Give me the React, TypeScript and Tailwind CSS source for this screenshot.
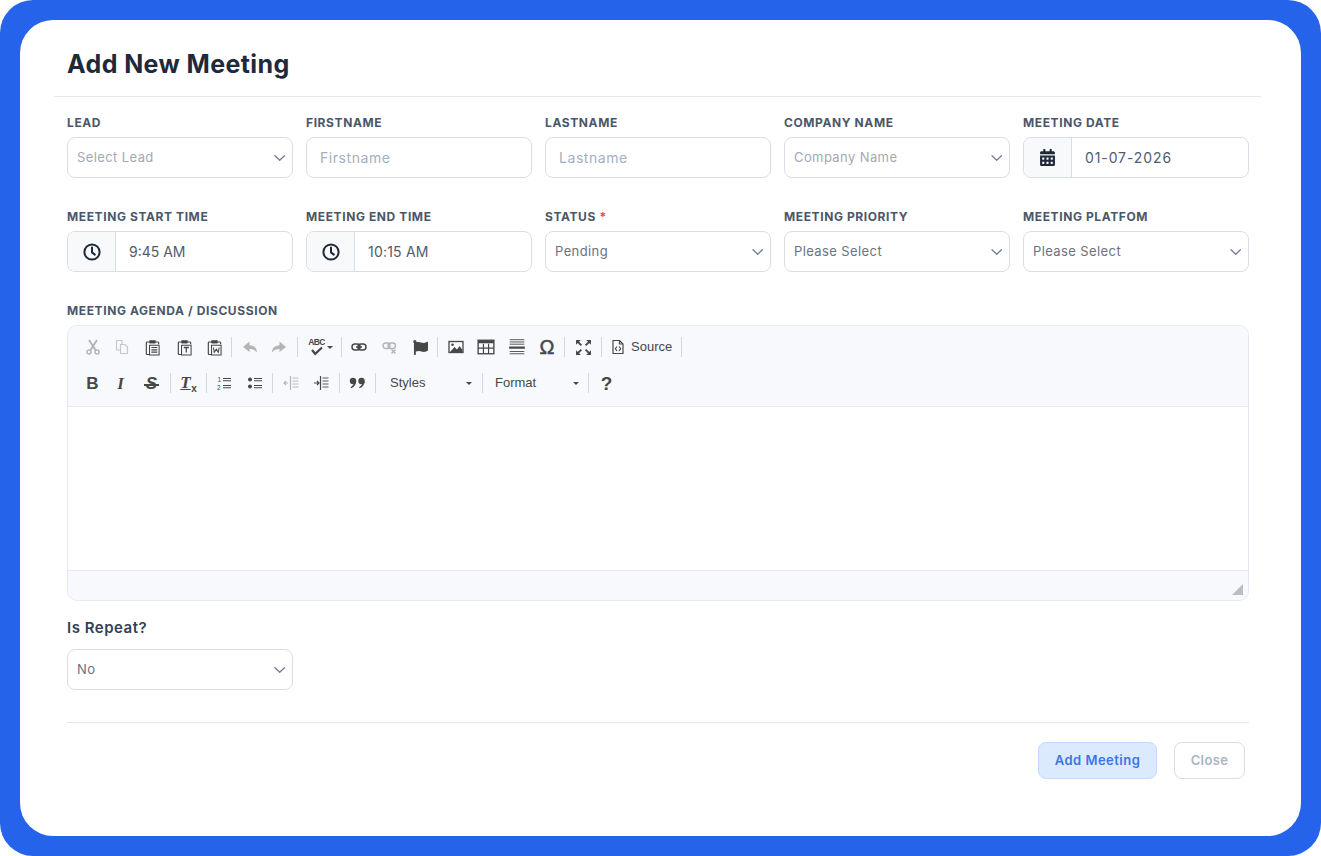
import React from "react";
import { FaCalendarAlt, FaFlag } from "react-icons/fa";

const Chevron = () => (
  <svg width="12" height="8" viewBox="0 0 12 8" fill="none" stroke="#737f90" strokeWidth="1.3" strokeLinecap="round" strokeLinejoin="round">
    <path d="M1 1.7 5.7 6.2l4.7-4.5" />
  </svg>
);
const Clock = () => (
  <svg width="18" height="18" viewBox="0 0 18 18" fill="none" stroke="#1f2937" strokeWidth="2" strokeLinecap="round" strokeLinejoin="round">
    <circle cx="9" cy="9" r="7.6" />
    <path d="M9 4.6V9.4l2.8 2.2" />
  </svg>
);
const Label = ({ children }: { children: React.ReactNode }) => (
  <div className="mb-[6px] h-[17px] text-[12px] font-bold uppercase leading-[17px] tracking-[0.6px] text-[#4b5768]">{children}</div>
);
const Sel = ({ text, muted }: { text: string; muted?: boolean }) => (
  <div className="flex h-[41px] items-center justify-between rounded-lg border border-[#d9dde6] bg-white pl-[9px] pr-[6px]">
    <span className={`text-[13px] tracking-[0.4px] ${muted ? "text-[#a3a9b4]" : "text-[#6b7280]"}`}>{text}</span>
    <Chevron />
  </div>
);
const Addon = ({ icon, value, track }: { icon: React.ReactNode; value: string; track: string }) => (
  <div className="flex h-[41px] overflow-hidden rounded-lg border border-[#d9dde6] bg-white">
    <div className="flex w-[48px] items-center justify-center border-r border-[#d9dde6] bg-[#f8f9fb]">{icon}</div>
    <div className={`flex items-center pl-[13px] text-[14px] text-[#515c6c] ${track}`}>{value}</div>
  </div>
);
const Txt = ({ placeholder }: { placeholder: string }) => (
  <div className="flex h-[41px] items-center rounded-lg border border-[#d9dde6] bg-white pl-[13px] text-[14px] tracking-[0.55px] text-[#a3afc2]">{placeholder}</div>
);

const Sep = ({ w }: { w: string }) => (
  <div className={`flex h-5 shrink-0 justify-center ${w}`}>
    <div className="h-5 w-px bg-[#d3d7de]" />
  </div>
);
const B = ({ w, children }: { w: string; children: React.ReactNode }) => (
  <div className={`flex h-5 shrink-0 items-center justify-center ${w}`}>{children}</div>
);
const Ic = ({ children, c = "#474747", s = 16 }: { children: React.ReactNode; c?: string; s?: number }) => (
  <svg width={s} height={s} viewBox="0 0 16 16" fill="none" stroke={c} strokeWidth="1.2" color={c}>{children}</svg>
);
const Clip = ({ children }: { children?: React.ReactNode }) => (
  <Ic s={17}>
    <path d="M5 2.8H3a.8.8 0 0 0-.8.8v10.2a.8.8 0 0 0 .8.8h2" strokeWidth="1.1" />
    <path d="M11 2.8h2a.8.8 0 0 1 .8.8V5" strokeWidth="1.1" />
    <path d="M5.3 1.6h5.4v2.2H5.3z" fill="#474747" strokeWidth=".8" />
    <path d="M5.2 5.8h9v9.2h-9z" strokeWidth="1" />
    {children}
  </Ic>
);
const Caret = () => <span className="ml-[1px] h-0 w-0 border-x-[3px] border-t-[3px] border-x-transparent border-t-[#474747]" />;

const Toolbar = () => (
  <div className="flex h-[81px] flex-col border-b border-[#e4e8f0] bg-[#f7f9fd] pl-[11px] font-['Liberation_Sans',sans-serif]">
    <div className="mt-[11px] flex h-5 items-center">
      <B w="w-[28px]"><Ic c="#b4b4b4"><path d="M4 1l6.5 10M12 1 5.5 11" strokeWidth="2" /><circle cx="4" cy="13" r="2" strokeWidth="1.5" /><circle cx="12" cy="13" r="2" strokeWidth="1.5" /></Ic></B>
      <B w="w-[29px]"><Ic c="#c8c8c8"><path d="M2.5 1.5h5.5l0 3.5M2.5 1.5v9.5h4" /><path d="M6.5 5.5h4.5l2.5 2.5v6.5h-7z" /></Ic></B>
      <B w="w-[33px]"><Clip><path d="M7 8h5.5M7 10.2h5.5M7 12.4h5.5" strokeWidth="1.1" /></Clip></B>
      <B w="w-[30px]"><Clip><path d="M7.3 8h4.8M9.7 8v4.8" strokeWidth="1.2" /></Clip></B>
      <B w="w-[30px]"><Clip><path d="M7 8l.8 4.6 1.9-3 1.9 3 .8-4.6" strokeWidth="1" /></Clip></B>
      <Sep w="w-[4px]" />
      <B w="w-[34px]"><Ic c="#b4b4b4"><path d="M7.5 2.5 1 8l6.5 5V10c3 0 5.2.8 7.5 3.5 0-4.5-3-7-7.5-7.3z" fill="#b4b4b4" stroke="none" /></Ic></B>
      <B w="w-[24px]"><Ic c="#b4b4b4"><path d="M8.5 2.5 15 8l-6.5 5V10c-3 0-5.2.8-7.5 3.5 0-4.5 3-7 7.5-7.3z" fill="#b4b4b4" stroke="none" /></Ic></B>
      <Sep w="w-[12px]" />
      <B w="w-[34px]">
        <span className="flex items-center">
          <span className="flex h-[18px] w-[18px] flex-col items-center">
            <span className="h-[8px] text-[8.5px] font-bold leading-[8px] tracking-[-0.6px] text-[#474747]">ABC</span>
            <svg width="14" height="10" viewBox="0 0 14 10" fill="none">
              <path d="M2 4l3.2 3.8L12 1.5" stroke="#474747" strokeWidth="2.2" />
            </svg>
          </span>
          <Caret />
        </span>
      </B>
      <Sep w="w-[8px]" />
      <B w="w-[28px]"><Ic><rect x="1" y="5" width="8" height="6" rx="3" strokeWidth="1.5" /><rect x="7" y="5" width="8" height="6" rx="3" strokeWidth="1.5" /><path d="M5 8h6" strokeWidth="1.5" /></Ic></B>
      <B w="w-[34px]"><Ic c="#b4b4b4"><rect x="1" y="4" width="7" height="5.5" rx="2.7" strokeWidth="1.4" /><rect x="6" y="4" width="7.5" height="5.5" rx="2.7" strokeWidth="1.4" /><path d="M9.5 10.5l4 4M13.5 10.5l-4 4" strokeWidth="1.4" /></Ic></B>
      <B w="w-[26px]"><FaFlag className="text-[15px] text-[#474747]" /></B>
      <Sep w="w-[8px]" />
      <B w="w-[30px]"><Ic><rect x="1" y="2.5" width="14" height="11" strokeWidth="1.3" /><circle cx="4.5" cy="5.7" r="1.3" fill="#474747" stroke="none" /><path d="M2 13l4.5-5 2.5 2.5 2.5-3.5L14.5 11v2.5z" fill="#474747" stroke="none" /></Ic></B>
      <B w="w-[30px]"><Ic s={18}><rect x="1" y="2" width="14" height="12" strokeWidth="1.2" /><path d="M1 3.5h14" strokeWidth="2.4" /><path d="M1 9h14M5.7 5v9M10.3 5v9" strokeWidth="1" /></Ic></B>
      <B w="w-[32px]"><Ic s={18}><path d="M1.5 1.5h13M1.5 3.5h13M1.5 5.5h13M1.5 12h13M1.5 14h13" strokeWidth=".8" /><path d="M1 8.5h14" strokeWidth="2" /></Ic></B>
      <B w="w-[28px]"><span className="text-[20px] leading-none text-[#474747] [-webkit-text-stroke:0.5px_#474747]">Ω</span></B>
      <Sep w="w-[6px]" />
      <B w="w-[32px]"><Ic s={17}><path d="M1.5 1.5 6 6M14.5 1.5 10 6M1.5 14.5 6 10M14.5 14.5 10 10" strokeWidth="1.8" /><path d="M1 1h4.5L1 5.5zM15 1h-4.5L15 5.5zM1 15h4.5L1 10.5zM15 15h-4.5L15 10.5z" fill="#474747" stroke="none" /></Ic></B>
      <Sep w="w-[4px]" />
      <div className="ml-[7px] flex h-5 w-4 items-center justify-center"><Ic><path d="M3 1.5h6.5l3.5 3.5v9.5H3z" /><path d="M9.5 1.5V5H13" /><path d="M7 7.5 5.3 9.7 7 12M9 7.5l1.7 2.2L9 12" strokeWidth="1.1" /></Ic></div>
      <span className="ml-[5px] w-[41px] text-[13px] leading-5 text-[#474747]">Source</span>
      <Sep w="w-[19px]" />
    </div>
    <div className="mt-[16px] flex h-5 items-center">
      <B w="w-[27px]"><span className="text-[17px] font-bold leading-none text-[#474747]">B</span></B>
      <B w="w-[29px]"><span className="font-['Liberation_Serif',serif] text-[17px] font-bold italic leading-none text-[#474747]">I</span></B>
      <B w="w-[33px]">
        <span className="relative text-[17px] font-bold italic leading-none text-[#474747]">S
          <span className="absolute left-[-2px] right-[-2px] top-[9px] h-[2px] bg-[#474747]" />
        </span>
      </B>
      <Sep w="w-[4px]" />
      <B w="w-[32px]"><span className="pr-[5px]"><span className="relative font-['Liberation_Serif',serif] text-[17px] font-bold italic leading-none text-[#474747] underline">T<span className="absolute -right-[6px] bottom-[-2px] font-['Liberation_Sans',sans-serif] text-[10px] not-italic no-underline">x</span></span></span></B>
      <Sep w="w-[4px]" />
      <B w="w-[32px]"><Ic><path d="M7 3.5h8M7 5.7h8M7 10.5h8M7 12.7h8" strokeWidth="1.1" /><text x="1.5" y="7" fontSize="6.5" fontFamily="Liberation Sans" fill="#474747" stroke="none">1</text><text x="1" y="14.5" fontSize="6.5" fontFamily="Liberation Sans" fill="#474747" stroke="none">2</text></Ic></B>
      <B w="w-[30px]"><Ic><circle cx="3" cy="4.5" r="2" fill="#474747" stroke="none" /><circle cx="3" cy="11.5" r="2" fill="#474747" stroke="none" /><path d="M7 3.5h8M7 5.7h8M7 10.5h8M7 12.7h8" strokeWidth="1.1" /></Ic></B>
      <Sep w="w-[4px]" />
      <B w="w-[34px]"><Ic c="#b4b4b4"><path d="M7.5 1v14" /><path d="M9.5 3h6M9.5 6h6M9.5 9h6M9.5 12h6" strokeWidth=".9" /><path d="M1 8h4M3 6 1 8l2 2" /></Ic></B>
      <B w="w-[26px]"><Ic><path d="M7.5 1v14" /><path d="M9.5 3h6M9.5 6h6M9.5 9h6M9.5 12h6" strokeWidth=".9" /><path d="M1 8h5M4 6l2 2-2 2" /></Ic></B>
      <Sep w="w-[10px]" />
      <B w="w-[26px]">
        <svg width="17" height="12" viewBox="0 0 17 12" fill="#474747">
          <circle cx="4" cy="4" r="3.2" /><path d="M7.2 4c0 3.5-2.3 6.3-5 7.2l-.6-1C3.4 9 4.6 7.6 4.8 6z" />
          <circle cx="12.5" cy="4" r="3.2" /><path d="M15.7 4c0 3.5-2.3 6.3-5 7.2l-.6-1c1.8-1.2 3-2.6 3.2-4.2z" />
        </svg>
      </B>
      <Sep w="w-[10px]" />
      <div className="flex w-[100px] shrink-0 items-center pl-[10px] pr-[8px]"><span className="flex-1 text-[13px] text-[#474747]">Styles</span><Caret /></div>
      <Sep w="w-[5px]" />
      <div className="flex w-[100px] shrink-0 items-center pl-[10px] pr-[6px]"><span className="flex-1 text-[13px] text-[#474747]">Format</span><Caret /></div>
      <Sep w="w-[7px]" />
      <B w="w-[29px]"><span className="text-[19px] font-bold leading-none text-[#474747]">?</span></B>
    </div>
  </div>
);

export default function App() {
  return (
    <div className="h-[856px] w-[1321px] rounded-[33px] bg-[#2563eb] p-5 font-['Inter',sans-serif]">
      <div className="h-[816px] rounded-[33px] bg-white pl-[34px] pr-[40px]">
        <div className="flex h-[77px] items-center border-b border-[#e5e7eb] pl-[13px] pt-[12px]">
          <h1 className="text-[25px] font-bold leading-8 tracking-[0.4px] text-[#1e293b]">Add New Meeting</h1>
        </div>
        <div className="pl-[13px] pr-[12px] pt-[17px]">
          <div className="grid grid-cols-5 gap-x-[13px] gap-y-[30px]">
            <div><Label>Lead</Label><Sel text="Select Lead" muted /></div>
            <div><Label>Firstname</Label><Txt placeholder="Firstname" /></div>
            <div><Label>Lastname</Label><Txt placeholder="Lastname" /></div>
            <div><Label>Company Name</Label><Sel text="Company Name" muted /></div>
            <div><Label>Meeting Date</Label><Addon icon={<FaCalendarAlt className="text-[17px] text-[#1f2937]" />} value="01-07-2026" track="tracking-[0.9px]" /></div>
            <div><Label>Meeting Start Time</Label><Addon icon={<Clock />} value="9:45 AM" track="tracking-normal" /></div>
            <div><Label>Meeting End Time</Label><Addon icon={<Clock />} value="10:15 AM" track="tracking-[0.2px]" /></div>
            <div><Label>Status <span className="text-[#ef4444]">*</span></Label><Sel text="Pending" /></div>
            <div><Label>Meeting Priority</Label><Sel text="Please Select" /></div>
            <div><Label>Meeting Platfom</Label><Sel text="Please Select" /></div>
          </div>
          <div className="mt-[30px]">
            <Label>Meeting Agenda / Discussion</Label>
            <div className="h-[276px] overflow-hidden rounded-[10px] border border-[#e4e8f0] bg-white">
              <Toolbar />
              <div className="h-[163px]" />
              <div className="relative h-[30px] border-t border-[#e4e8f0] bg-[#f7f9fd]">
                <div className="absolute bottom-[5px] right-[5px] h-0 w-0 border-b-[11px] border-l-[11px] border-b-[#bdbdbd] border-l-transparent" />
              </div>
            </div>
          </div>
          <div className="mt-[19px] h-4 text-[15px] font-semibold leading-4 tracking-[0.5px] text-[#334155]">Is Repeat?</div>
          <div className="mt-[13px] w-[226px]"><Sel text="No" /></div>
          <div className="mt-[32px] border-t border-[#e5e7eb]" />
          <div className="mt-[19px] flex justify-end gap-[17px] pr-[4px]">
            <div className="flex h-[37px] w-[119px] items-center justify-center rounded-lg border border-[#bfdbfe] bg-[#dbeafe] text-[13px] font-semibold tracking-[0.5px] text-[#3b74ea]">Add Meeting</div>
            <div className="flex h-[37px] w-[71px] items-center justify-center rounded-lg border border-[#d9dde6] bg-white text-[13px] font-semibold tracking-[0.4px] text-[#a9b4c4]">Close</div>
          </div>
        </div>
      </div>
    </div>
  );
}
